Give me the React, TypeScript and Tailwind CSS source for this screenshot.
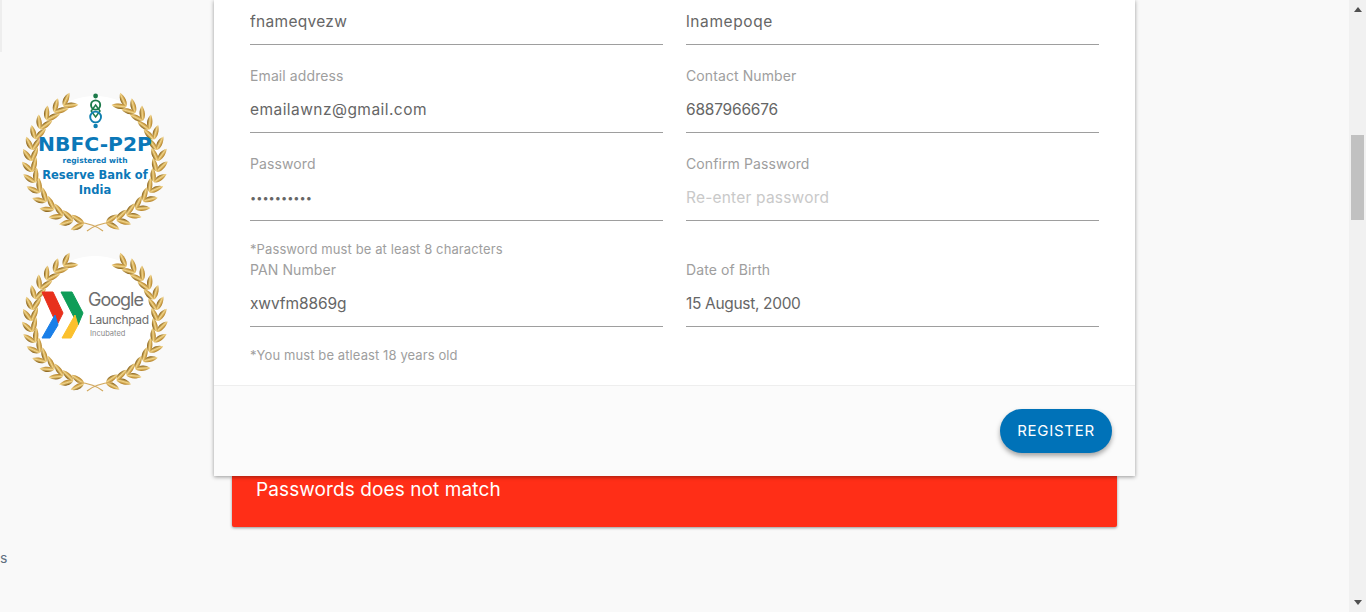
const FONT = "font-['Inter',sans-serif]";

// laurel leaves placed around the circle, one side mirrored for the other
const STEPS = Array.from({ length: 15 }, (_, i) => 10 + i * 10);

function Leaf({ x, y, rot, id }: { x: number; y: number; rot: number; id: string }) {
  return (
    <path
      d="M0 0C3 -4.2 10 -4.4 15 -0.2C10 2.8 3 2.8 0 0Z"
      fill={`url(#${id})`}
      transform={`translate(${x} ${y}) rotate(${rot})`}
    />
  );
}

function Laurel({ id }: { id: string }) {
  const cx = 73;
  const cy = 70;
  const r = 63;
  const leaves = STEPS.flatMap((deg, i) => {
    const a = (deg * Math.PI) / 180;
    const x = cx + r * Math.sin(a);
    const y = cy + r * Math.cos(a);
    const heading = -deg; // direction of travel up the branch
    return [
      <Leaf key={`ro${i}`} id={id} x={x} y={y} rot={heading + 36} />,
      <Leaf key={`ri${i}`} id={id} x={x} y={y} rot={heading - 24} />,
      <Leaf key={`lo${i}`} id={id} x={2 * cx - x} y={y} rot={180 - heading - 36} />,
      <Leaf key={`li${i}`} id={id} x={2 * cx - x} y={y} rot={180 - heading + 24} />,
    ];
  });
  return (
    <>
      <defs>
        <linearGradient id={id} x1="0" y1="0" x2="0" y2="1">
          <stop offset="0" stopColor="#7f560c" />
          <stop offset="0.5" stopColor="#f3d588" />
          <stop offset="1" stopColor="#b07c20" />
        </linearGradient>
      </defs>
      {leaves}
      <path d="M55 131Q73 133 81 140" fill="none" stroke="#d2a85c" strokeWidth="1.1" />
      <path d="M91 131Q73 133 65 140" fill="none" stroke="#d2a85c" strokeWidth="1.1" />
    </>
  );
}

function BadgeFrame({ id, children }: { id: string; children: React.ReactNode }) {
  return (
    <div className="relative w-[146px] h-[141px]">
      <svg width="146" height="141" viewBox="0 0 146 141" className="block">
        <circle cx="73" cy="69" r="64" fill="#ffffff" />
        <Laurel id={id} />
      </svg>
      <div className={`absolute inset-0 ${FONT}`}>{children}</div>
    </div>
  );
}

function RbiBadge() {
  return (
    <BadgeFrame id="goldA">
      <svg width="22" height="40" viewBox="0 0 22 40" className="absolute left-[63px] top-0">
        <circle cx="10.6" cy="5" r="2.4" fill="#1c7a4a" />
        <circle cx="10.6" cy="14" r="4.6" fill="none" stroke="#1c7a4a" strokeWidth="1.9" />
        <path d="M10.6 14L15 20L10.6 26L6.2 20Z" fill="none" stroke="#1c7a4a" strokeWidth="1.5" />
        <circle cx="10.6" cy="26" r="5.4" fill="none" stroke="#0f7fb0" strokeWidth="1.9" />
        <circle cx="10.6" cy="35" r="2.2" fill="#0f7fb0" />
      </svg>
      <div className="absolute inset-x-0 top-[42px] text-center text-[#0b78b8] font-['DejaVu_Sans',sans-serif] font-bold">
        <div className="text-[20.3px] leading-[22px]">NBFC-P2P</div>
        <div className="text-[7.5px] leading-[10px] mt-[1px]">registered with</div>
        <div className="text-[11.5px] leading-[15px] mt-[2px]">Reserve Bank of</div>
        <div className="text-[11.5px] leading-[14px]">India</div>
      </div>
    </BadgeFrame>
  );
}

function LaunchpadBadge() {
  return (
    <BadgeFrame id="goldB">
      <svg width="44" height="49" viewBox="0 0 44 49" className="absolute left-[19px] top-[40px]">
        <path d="M1 1H12L22 22L16 34Z" fill="#e8301c" stroke="#e8301c" strokeLinejoin="round" />
        <path d="M14 24L17 34L9 47H1Z" fill="#1a7fe8" stroke="#1a7fe8" strokeLinejoin="round" />
        <path d="M20 1H31L42 22L37 34Z" fill="#0f9d58" stroke="#0f9d58" strokeLinejoin="round" />
        <path d="M34 24L37 34L30 47H21Z" fill="#fbc02d" stroke="#fbc02d" strokeLinejoin="round" />
      </svg>
      <div className="absolute left-[66px] top-[37px] text-[#6e6e6e] text-[18px] leading-[24px] tracking-[-1px]">Google</div>
      <div className="absolute left-[67px] top-[61px] text-[#6e6e6e] text-[12px] leading-[16px] tracking-[-0.4px]">Launchpad</div>
      <div className="absolute left-[68px] top-[78px] text-[#8a8a8a] text-[7.5px] leading-[10px]">Incubated</div>
    </BadgeFrame>
  );
}

function Field({
  label,
  value,
  placeholder,
  type = "text",
  inputClass = "text-[15.5px]",
}: {
  label?: string;
  value?: string;
  placeholder?: string;
  type?: string;
  inputClass?: string;
}) {
  return (
    <div>
      {label && <div className="h-[22px] leading-[22px] text-[14px] tracking-[0.1px] text-[#9e9e9e]">{label}</div>}
      <input
        readOnly
        type={type}
        defaultValue={value}
        placeholder={placeholder}
        className={`block w-full h-[46px] border-b border-[#9e9e9e] bg-transparent text-[#666666] placeholder:text-[#c9c9c9] outline-none ${inputClass}`}
      />
    </div>
  );
}

function Hint({ children }: { children: React.ReactNode }) {
  return <div className="col-span-2 h-[19px] leading-[19px] text-[13px] tracking-[0.1px] text-[#9e9e9e] mt-[19px]">{children}</div>;
}

export default function App() {
  return (
    <div className={`flex w-[1366px] h-[612px] overflow-hidden bg-[#f9f9f9] ${FONT}`}>
      <aside className="w-[214px] shrink-0">
        <div className="w-[2px] h-[52px] bg-[#eeeeee]" />
        <div className="ml-[22px] mt-[39px] flex flex-col gap-[19px]">
          <RbiBadge />
          <LaunchpadBadge />
        </div>
        <div className="mt-[156px] h-[20px] leading-[20px] text-[14px] text-[#5f6f7f]">s</div>
      </aside>

      <main className="w-[921px] shrink-0">
        <div className="relative z-10 bg-white h-[476px] shadow-[0_1px_4px_rgba(0,0,0,0.4)] flex flex-col">
          <div className="flex-1 px-[36px] -mt-px">
            <div className="grid grid-cols-2 gap-x-[23px]">
              <Field value="fnameqvezw" inputClass="text-[15.5px] tracking-[0.3px]" />
              <Field value="lnamepoqe" inputClass="text-[15.5px] tracking-[0.6px]" />
              <div className="mt-[20px]"><Field label="Email address" value="emailawnz@gmail.com" inputClass="text-[15.5px] tracking-[0.45px]" /></div>
              <div className="mt-[20px]"><Field label="Contact Number" value="6887966676" inputClass="text-[15.5px] tracking-[-0.2px]" /></div>
              <div className="mt-[20px]"><Field label="Password" type="password" value="abcdefghij" inputClass="text-[11px]" /></div>
              <div className="mt-[20px]"><Field label="Confirm Password" placeholder="Re-enter password" inputClass="text-[15.5px] tracking-[0.2px]" /></div>
              <Hint>*Password must be at least 8 characters</Hint>
              <Field label="PAN Number" value="xwvfm8869g" inputClass="text-[15.5px] tracking-[-0.1px]" />
              <Field label="Date of Birth" value="15 August, 2000" inputClass="text-[15.5px] tracking-[-0.33px]" />
              <Hint>*You must be atleast 18 years old</Hint>
            </div>
          </div>
          <div className="h-[91px] border-t border-[#eeeeee] bg-[#fbfbfb] flex items-center justify-end px-[23px]">
            <button className="w-[112px] h-[44px] rounded-full bg-[#0072b8] text-white text-[15px] tracking-[0.7px] shadow-[0_3px_5px_rgba(0,0,0,0.35)]">
              REGISTER
            </button>
          </div>
        </div>
        <div className="mx-[18px] h-[51px] rounded-b-[2px] bg-[#ff2e17] px-[24px] pt-[2px] text-white text-[19px] tracking-[0.1px] leading-[24px] shadow-[0_1px_3px_rgba(0,0,0,0.4)]">
          Passwords does not match
        </div>
      </main>

      <div className="flex-1" />

      <div className="w-[17px] shrink-0 bg-[#f1f1f1] flex flex-col items-center">
        <svg width="8" height="5" viewBox="0 0 8 5" className="mt-[7px] shrink-0">
          <path d="M4 0L8 5H0Z" fill="#505050" />
        </svg>
        <div className="mt-[123px] w-[13px] h-[85px] bg-[#c1c1c1]" />
        <svg width="8" height="5" viewBox="0 0 8 5" className="mt-auto mb-[7px] shrink-0">
          <path d="M0 0H8L4 5Z" fill="#505050" />
        </svg>
      </div>
    </div>
  );
}
